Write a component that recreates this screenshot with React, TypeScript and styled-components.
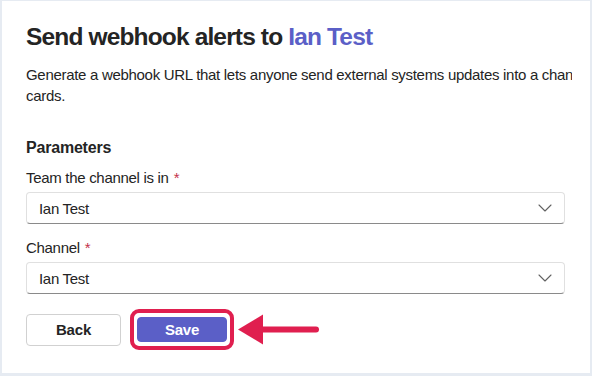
import React from "react";
import styled, { createGlobalStyle } from "styled-components";

const Global = createGlobalStyle`
  html, body { margin: 0; padding: 0; }
  body {
    background: #e6ebf2;
    font-family: "Liberation Sans", Arial, sans-serif;
    color: #242424;
    -webkit-font-smoothing: antialiased;
  }
`;

const Frame = styled.div`
  width: 592px;
  height: 376px;
  box-sizing: border-box;
  padding: 1px 2px 3px 2px;
  overflow: hidden;
`;

const Panel = styled.div`
  height: 100%;
  background: #ffffff;
  box-sizing: border-box;
  padding: 20px 0 0 24px;
  display: flex;
  flex-direction: column;
  overflow: hidden;
`;

const Title = styled.h1`
  margin: 0;
  font-size: 24.5px;
  line-height: 32px;
  font-weight: 700;
  letter-spacing: -0.85px;
  color: #242424;
`;

const Accent = styled.span`
  color: #5b5fc7;
`;

const Description = styled.p`
  margin: 11px 0 0;
  width: 546px;
  font-size: 15px;
  line-height: 21px;
  letter-spacing: -0.3px;
  white-space: nowrap;
  overflow: hidden;
  color: #242424;
`;

const SectionTitle = styled.h2`
  margin: 31px 0 0;
  font-size: 16px;
  line-height: 22px;
  font-weight: 700;
  letter-spacing: -0.2px;
`;

const Field = styled.div<{ $mt: number }>`
  display: flex;
  flex-direction: column;
  width: 539px;
  margin-top: ${(p) => p.$mt}px;
`;

const Label = styled.label`
  font-size: 15px;
  line-height: 20px;
  letter-spacing: -0.3px;
  margin-bottom: 4px;
`;

const Req = styled.span`
  color: #c4314b;
  margin-left: 5px;
`;

const Select = styled.div`
  height: 32px;
  box-sizing: border-box;
  border: 1px solid #e0e0e0;
  border-bottom-color: #8a8a8a;
  border-radius: 4px;
  display: flex;
  align-items: center;
  justify-content: space-between;
  padding: 0 12px 0 12px;
  font-size: 15px;
  letter-spacing: -0.3px;
  color: #242424;
`;

const Actions = styled.div`
  display: flex;
  align-items: center;
  margin-top: 15px;
`;

const Button = styled.button<{ $primary?: boolean }>`
  height: ${(p) => (p.$primary ? "25px" : "32px")};
  width: ${(p) => (p.$primary ? "90px" : "95px")};
  box-sizing: border-box;
  border-radius: 4px;
  font-family: inherit;
  font-size: 15px;
  font-weight: 700;
  letter-spacing: -0.2px;
  padding: 0;
  cursor: pointer;
  border: 1px solid ${(p) => (p.$primary ? "#5b5fc7" : "#d1d1d1")};
  background: ${(p) => (p.$primary ? "#5b5fc7" : "#ffffff")};
  color: ${(p) => (p.$primary ? "#ffffff" : "#242424")};
`;

const Highlight = styled.div`
  padding: 4px 3px;
  border: 4px solid #e01f4f;
  border-radius: 9px;
  background: #ffffff;
  display: flex;
  margin-left: 9px;
`;

const Arrow = styled.svg`
  margin-left: 4px;
  display: block;
`;

const Chevron = () => (
  <svg width="14" height="8" viewBox="0 0 14 8" fill="none">
    <path d="M1 1l6 6 6-6" stroke="#616161" strokeWidth="1.1" strokeLinecap="round" strokeLinejoin="round" />
  </svg>
);

export default function App() {
  return (
    <>
      <Global />
      <Frame>
        <Panel>
          <Title>
            Send webhook alerts to <Accent>Ian Test</Accent>
          </Title>
          <Description>
            Generate a webhook URL that lets anyone send external systems updates into a channel as
            <br />
            cards.
          </Description>
          <SectionTitle>Parameters</SectionTitle>
          <Field $mt={9}>
            <Label>
              Team the channel is in<Req>*</Req>
            </Label>
            <Select>
              <span>Ian Test</span>
              <Chevron />
            </Select>
          </Field>
          <Field $mt={14}>
            <Label>
              Channel<Req>*</Req>
            </Label>
            <Select>
              <span>Ian Test</span>
              <Chevron />
            </Select>
          </Field>
          <Actions>
            <Button>Back</Button>
            <Highlight>
              <Button $primary>Save</Button>
            </Highlight>
            <Arrow width="82" height="32" viewBox="0 0 82 32">
              <polygon points="0,15.5 25,0.5 25,30.5" fill="#e01f4f" />
              <line x1="23" y1="15.5" x2="78" y2="15.5" stroke="#e01f4f" strokeWidth="6" strokeLinecap="round" />
            </Arrow>
          </Actions>
        </Panel>
      </Frame>
    </>
  );
}
